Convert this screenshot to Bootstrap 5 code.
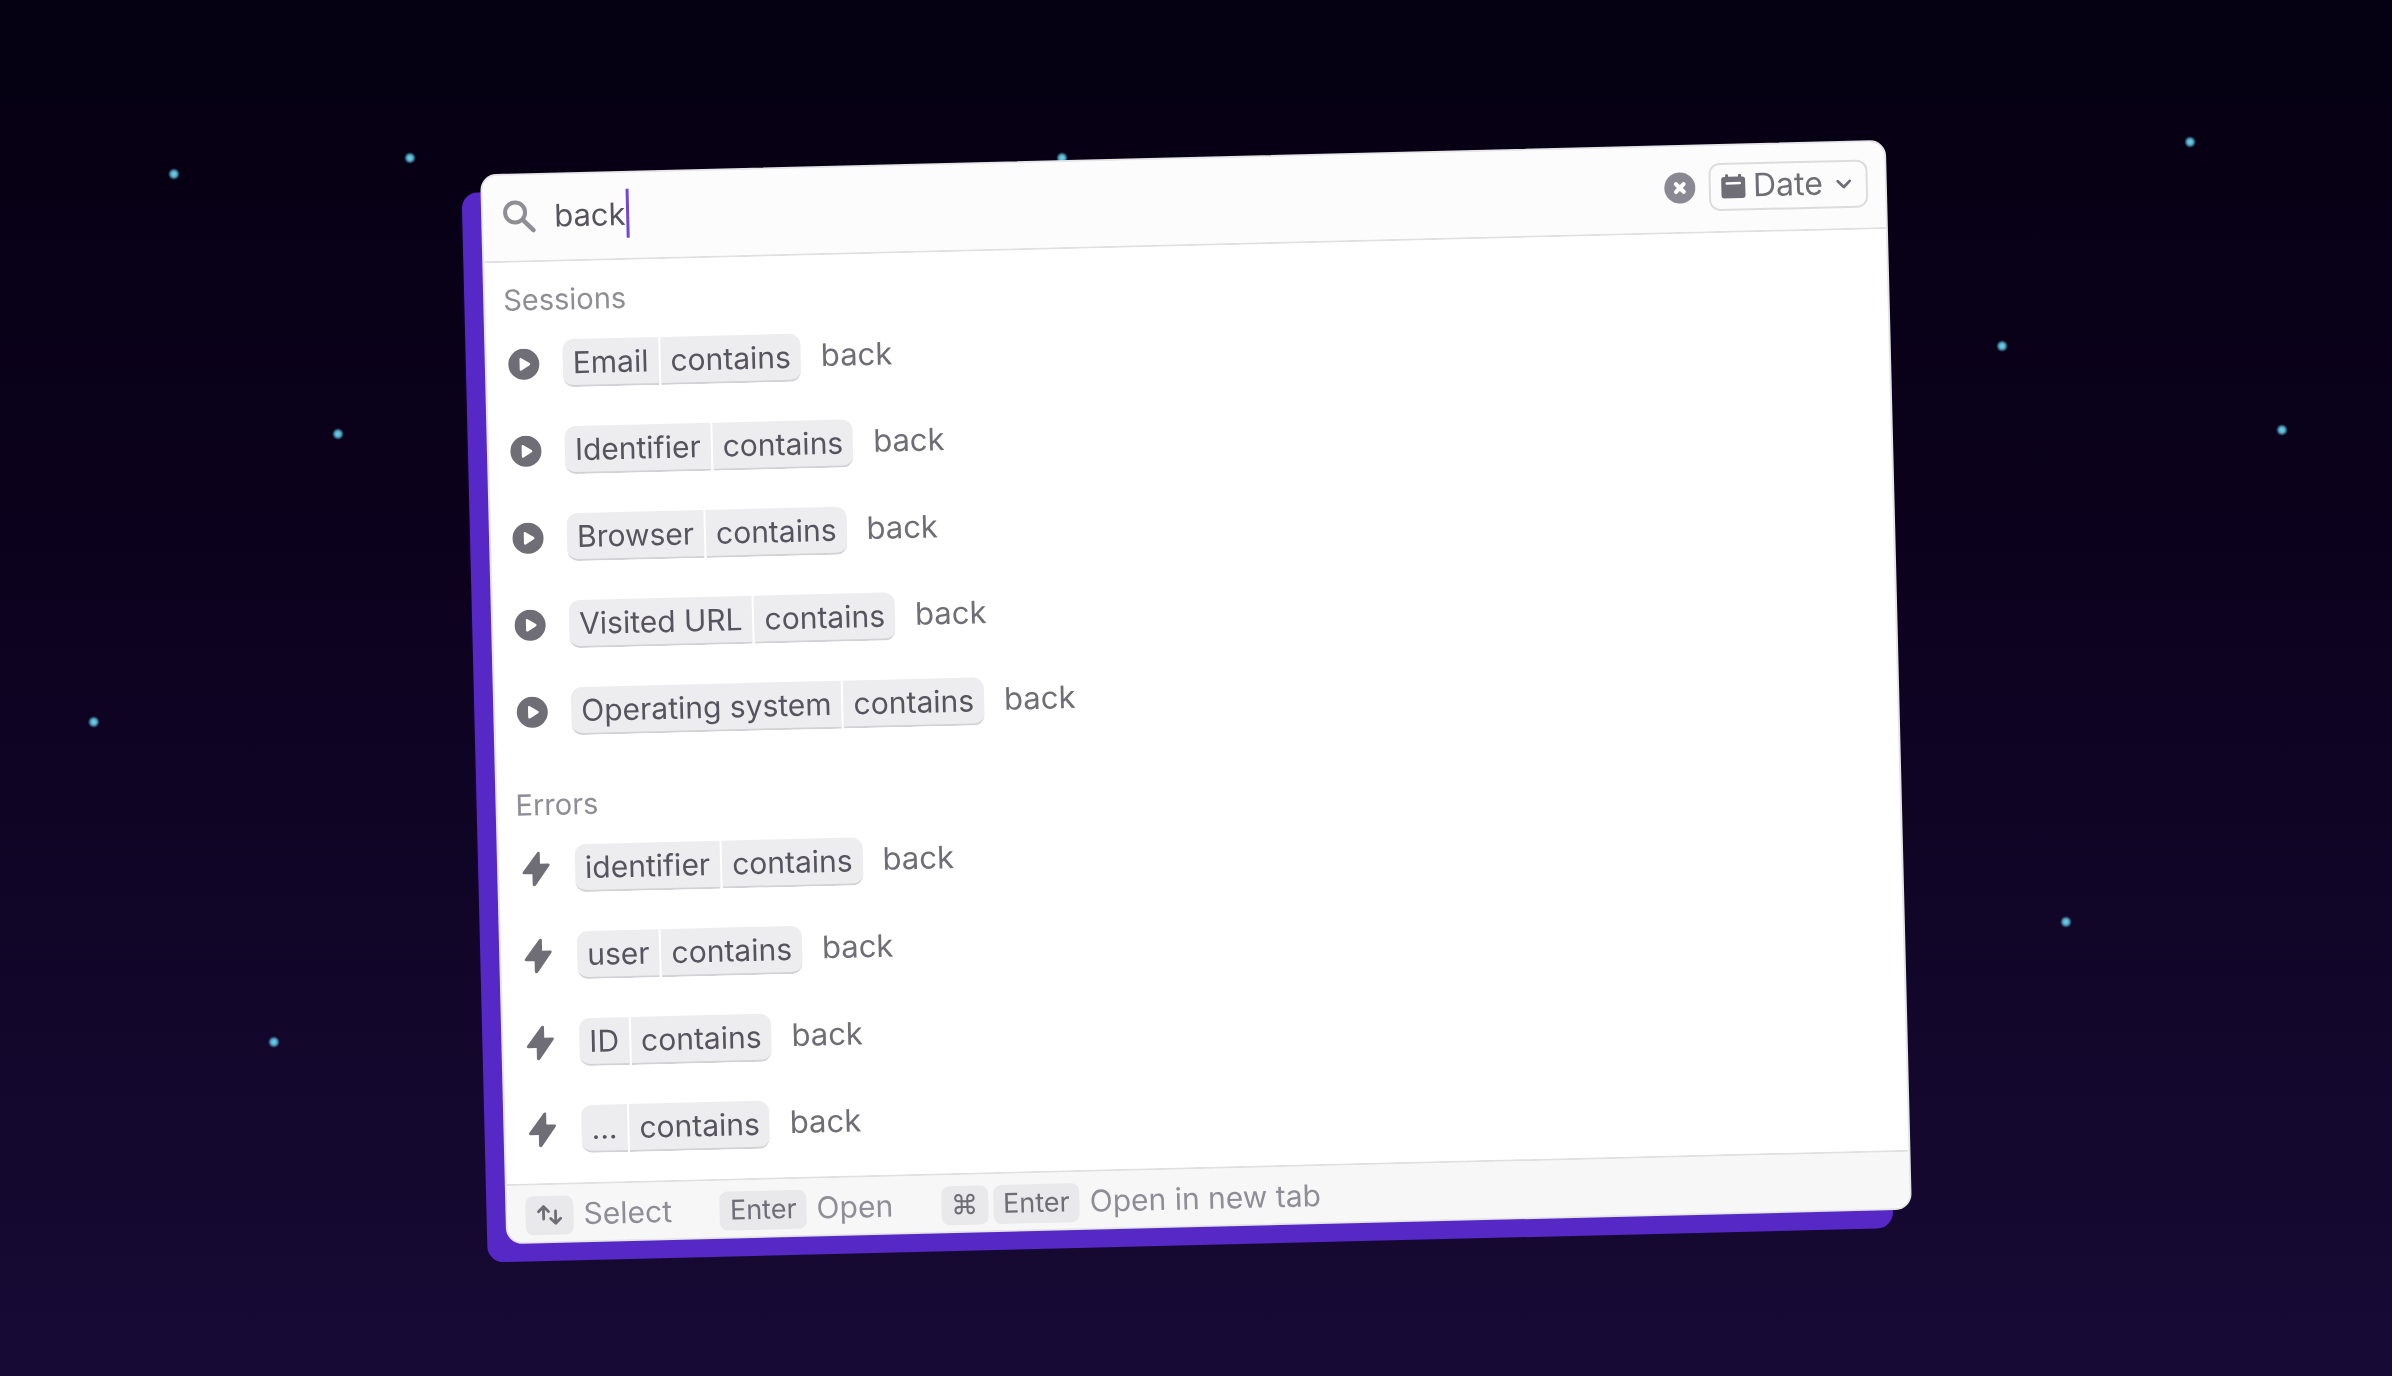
<!DOCTYPE html>
<html lang="en">
<head>
<meta charset="utf-8">
<meta name="viewport" content="width=device-width, initial-scale=1">
<title>Search</title>
<link href="https://cdn.jsdelivr.net/npm/bootstrap@5.3.0/dist/css/bootstrap.min.css" rel="stylesheet">
<style>
  body { font-family: Inter, "Liberation Sans", sans-serif; font-size: 30px; line-height: 40px; color: #6f6d76;
         background: linear-gradient(#050012, #0b011b 35%, #170a35) no-repeat #170a35; overflow-x: hidden; }
  .sky { z-index: -1; }
  .palette { width: 100%; max-width: 1406px; background: #fff; border: 2px solid #e6e5e8; border-radius: 16px;
             box-shadow: -19px 18px 0 #5628c6; transform: rotate(-1.4deg); margin-top: 8px; }
  .palette-head { background: #fcfcfc; border-bottom: 2px solid #e0dfe2; border-radius: 14px 14px 0 0; height: 87px; padding: 0 17px 4px 19px; }
  .query-label { margin-right: 18px; }
  .query { width: 72px; padding: 0; border: 0; background: transparent; color: #57545f; font-size: 31px; outline: 0; }
  .caret { width: 3px; height: 49px; background: #7047d6; }
  .date-btn { height: 48px; gap: 7px; border: 2px solid #dcdbde; border-radius: 11px; background: #fcfcfc; color: #6f6d76; font-size: 32px; padding: 0 14px 0 10px; line-height: 40px; }
  .date-btn span { padding: 0 6px 2px 0; }
  .clear-btn { border: 0; background: none; padding: 0; margin-right: 13px; line-height: 0; }
  .results { padding: 18px 18px 29px; }
  .group-title { font-size: 29px; line-height: 40px; color: #8f8d96; margin: 0 0 20px; font-weight: 400; }
  .hit-list { gap: 39px; margin-bottom: 49px; }
  .hit-list:last-child { margin-bottom: 0; }
  .hit { color: #6f6d76; text-decoration: none; height: 48px; }
  .hit-icon { width: 38px; margin-right: 20px; }
  .term { font-size: 31px; padding: 0 0 4px 20px; }
  .chips { gap: 2px; }
  .chip { background: #ededef; color: #57545f; border-bottom: 2px solid #d2d1d5; height: 48px; line-height: 46px; padding: 0 10px; }
  .chip:first-child { border-radius: 11px 0 0 11px; }
  .chip:last-child { border-radius: 0 11px 11px 0; }
  .palette-foot { background: #f7f7f8; border-top: 2px solid #e0dfe2; border-radius: 0 0 14px 14px; height: 58px; padding: 4px 18px 0; color: #8f8d96; }
  .hint { gap: 5px; }
  .hint span { padding: 0 0 2px 5px; }
  .key { font-family: inherit; background: #e9e9eb; color: #6f6d76; border-radius: 8px; font-size: 27px; line-height: 38px; height: 39px; padding: 0 10px; display: flex; align-items: center; }
</style>
<script src="https://cdn.jsdelivr.net/npm/bootstrap@5.3.0/dist/js/bootstrap.bundle.min.js"></script>
</head>
<body>
<svg class="sky position-fixed top-0 start-0 w-100 h-100" aria-hidden="true">
  <defs>
    <radialGradient id="glow"><stop offset="0" stop-color="#6fd6f0"/><stop offset=".45" stop-color="#58b1cd"/><stop offset="1" stop-color="#58b1cd" stop-opacity="0"/></radialGradient>
  </defs>
  <g fill="url(#glow)">
    <circle cx="7.27%" cy="12.65%" r="6"/><circle cx="17.14%" cy="11.48%" r="6"/><circle cx="14.13%" cy="31.54%" r="6"/>
    <circle cx="44.4%" cy="11.48%" r="6"/><circle cx="91.56%" cy="10.32%" r="6"/><circle cx="83.7%" cy="25.15%" r="6"/>
    <circle cx="95.4%" cy="31.25%" r="6"/><circle cx="86.37%" cy="67%" r="6"/><circle cx="3.92%" cy="52.47%" r="6"/>
    <circle cx="11.45%" cy="75.73%" r="6"/>
  </g>
</svg>
<svg class="d-none" aria-hidden="true">
  <symbol id="play" viewBox="0 0 32 32"><circle cx="16" cy="16" r="15.500" fill="#6f6d76"/><path d="M11.800 11v10c0 1 .9 1.600 1.800 1.100l8.200-5c.8-.5.8-1.700 0-2.200l-8.200-5c-.9-.5-1.800.1-1.800 1.100z" fill="#fff"/></symbol>
  <symbol id="bolt" viewBox="0 0 28 36"><path d="M15.200 1.500c.6-1.400 2.800-1.200 2.800.5v10.600h8.100c1.400 0 2 1.300 1.100 2.400L13.300 34.300c-1 1.300-3.100.7-3.100-.8V22.900H1.900c-1.400 0-2-1.200-1.200-2.300z" fill="#6f6d76"/></symbol>
</svg>

<main class="container-fluid min-vh-100 d-flex align-items-center justify-content-center">
  <section class="palette" aria-label="Search">
    <form class="palette-head d-flex align-items-center">
      <label for="q" class="query-label d-flex">
        <svg width="34" height="34" viewBox="0 0 34 34" fill="none" stroke="#8f8d96" role="img" aria-label="Search"><circle cx="13" cy="13" r="10" stroke-width="4"/><path d="M20.500 20.500L31 31" stroke-width="4.500" stroke-linecap="round"/></svg>
      </label>
      <input id="q" class="query" type="text" value="back" autocomplete="off">
      <span class="caret"></span>
      <button type="button" class="clear-btn ms-auto" aria-label="Clear">
        <svg width="32" height="32" viewBox="0 0 32 32"><circle cx="16" cy="16" r="15.500" fill="#8a8892"/><path d="M12.200 12.200l7.600 7.600M19.800 12.200l-7.600 7.600" stroke="#fff" stroke-width="4.200" stroke-linecap="round"/></svg>
      </button>
      <button type="button" class="date-btn d-flex align-items-center">
        <svg width="25" height="25" viewBox="0 0 25 25" fill="#6f6d76"><path d="M4.500 1.500c0-1.600 3-1.600 3 0V3h10V1.500c0-1.600 3-1.600 3 0V3h1A3 3 0 0 1 24.500 6v15.500a3 3 0 0 1-3 3h-18a3 3 0 0 1-3-3V6a3 3 0 0 1 3-3h1z"/><path d="M6 9.500h13" stroke="#fcfcfc" stroke-width="2.500" stroke-linecap="round"/></svg>
        <span>Date</span>
        <svg width="16" height="10" viewBox="0 0 16 10" fill="none" stroke="#6f6d76" stroke-width="2.800" stroke-linecap="round" stroke-linejoin="round"><path d="M2 2l6 6 6-6"/></svg>
      </button>
    </form>

    <div class="results">
      <h2 class="group-title">Sessions</h2>
      <div class="hit-list d-flex flex-column">
        <a href="#" class="hit d-flex align-items-center"><svg class="hit-icon" height="32"><use href="#play"/></svg><span class="chips d-flex"><span class="chip">Email</span><span class="chip">contains</span></span><span class="term">back</span></a>
        <a href="#" class="hit d-flex align-items-center"><svg class="hit-icon" height="32"><use href="#play"/></svg><span class="chips d-flex"><span class="chip">Identifier</span><span class="chip">contains</span></span><span class="term">back</span></a>
        <a href="#" class="hit d-flex align-items-center"><svg class="hit-icon" height="32"><use href="#play"/></svg><span class="chips d-flex"><span class="chip">Browser</span><span class="chip">contains</span></span><span class="term">back</span></a>
        <a href="#" class="hit d-flex align-items-center"><svg class="hit-icon" height="32"><use href="#play"/></svg><span class="chips d-flex"><span class="chip">Visited URL</span><span class="chip">contains</span></span><span class="term">back</span></a>
        <a href="#" class="hit d-flex align-items-center"><svg class="hit-icon" height="32"><use href="#play"/></svg><span class="chips d-flex"><span class="chip">Operating system</span><span class="chip">contains</span></span><span class="term">back</span></a>
      </div>
      <h2 class="group-title">Errors</h2>
      <div class="hit-list d-flex flex-column">
        <a href="#" class="hit d-flex align-items-center"><svg class="hit-icon" height="36"><use href="#bolt"/></svg><span class="chips d-flex"><span class="chip">identifier</span><span class="chip">contains</span></span><span class="term">back</span></a>
        <a href="#" class="hit d-flex align-items-center"><svg class="hit-icon" height="36"><use href="#bolt"/></svg><span class="chips d-flex"><span class="chip">user</span><span class="chip">contains</span></span><span class="term">back</span></a>
        <a href="#" class="hit d-flex align-items-center"><svg class="hit-icon" height="36"><use href="#bolt"/></svg><span class="chips d-flex"><span class="chip">ID</span><span class="chip">contains</span></span><span class="term">back</span></a>
        <a href="#" class="hit d-flex align-items-center"><svg class="hit-icon" height="36"><use href="#bolt"/></svg><span class="chips d-flex"><span class="chip">...</span><span class="chip">contains</span></span><span class="term">back</span></a>
      </div>
    </div>

    <footer class="palette-foot d-flex align-items-center gap-5">
      <div class="hint d-flex align-items-center"><kbd class="key"><svg width="28" height="22" viewBox="0 0 26 22" fill="none" stroke="#6f6d76" stroke-width="2.800" stroke-linecap="round" stroke-linejoin="round"><path d="M7 15V3M2 7.500L7 2.500l5 5M19 7v12M14 14.500l5 5 5-5"/></svg></kbd><span>Select</span></div>
      <div class="hint d-flex align-items-center"><kbd class="key">Enter</kbd><span>Open</span></div>
      <div class="hint d-flex align-items-center"><kbd class="key">⌘</kbd><kbd class="key">Enter</kbd><span>Open in new tab</span></div>
    </footer>
  </section>
</main>
</body>
</html>
